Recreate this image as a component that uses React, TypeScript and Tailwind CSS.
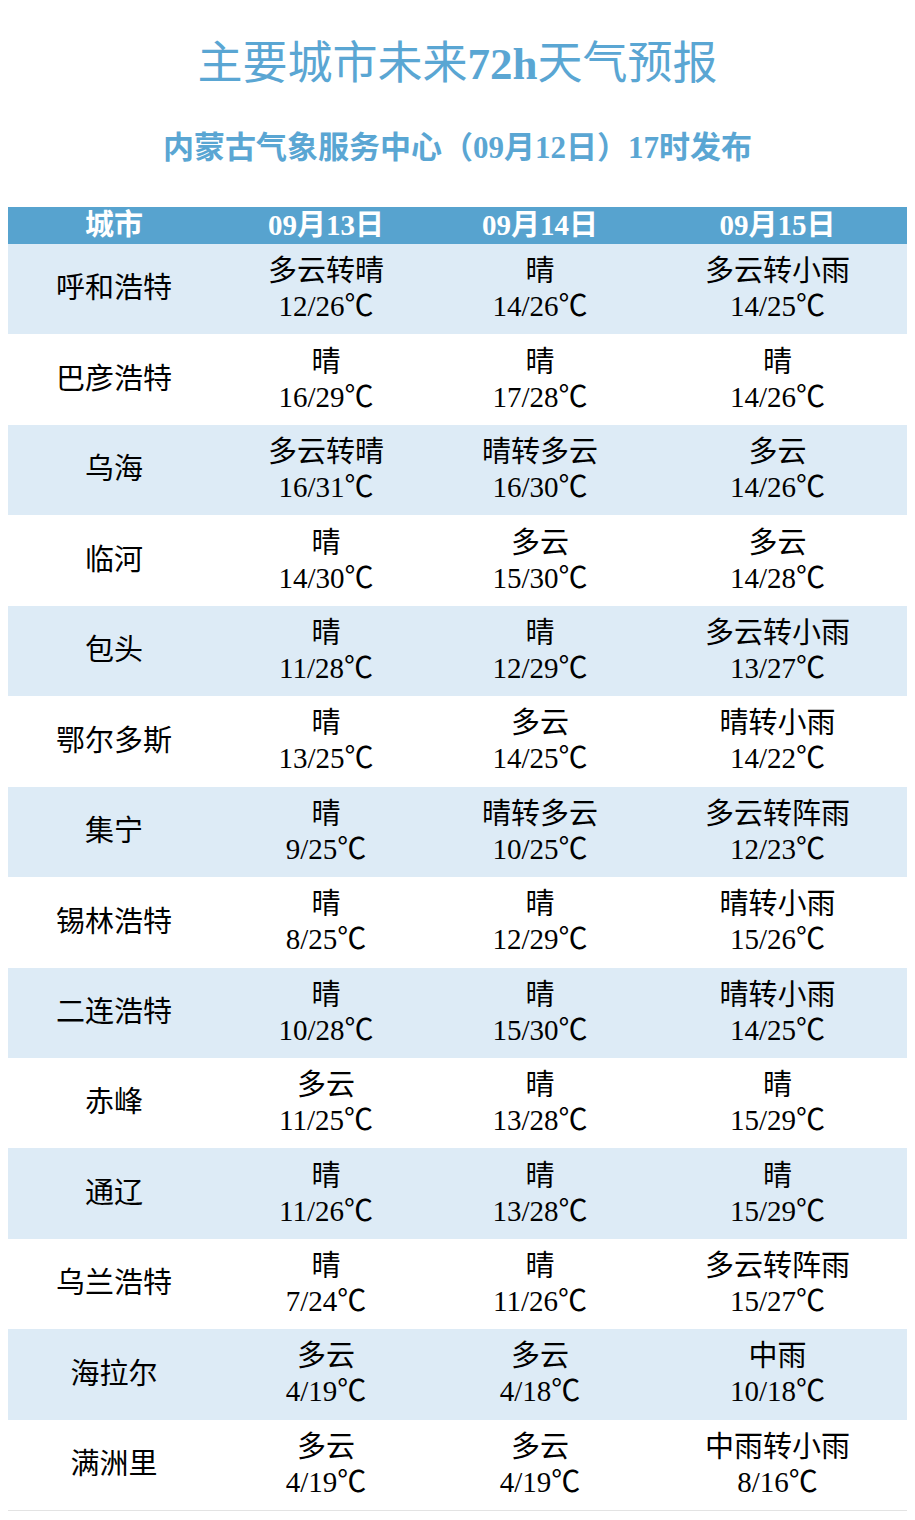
const rows: [string, string, string, string, string, string, string][] = [
  ['呼和浩特', '多云转晴', '12/26℃', '晴', '14/26℃', '多云转小雨', '14/25℃'],
  ['巴彦浩特', '晴', '16/29℃', '晴', '17/28℃', '晴', '14/26℃'],
  ['乌海', '多云转晴', '16/31℃', '晴转多云', '16/30℃', '多云', '14/26℃'],
  ['临河', '晴', '14/30℃', '多云', '15/30℃', '多云', '14/28℃'],
  ['包头', '晴', '11/28℃', '晴', '12/29℃', '多云转小雨', '13/27℃'],
  ['鄂尔多斯', '晴', '13/25℃', '多云', '14/25℃', '晴转小雨', '14/22℃'],
  ['集宁', '晴', '9/25℃', '晴转多云', '10/25℃', '多云转阵雨', '12/23℃'],
  ['锡林浩特', '晴', '8/25℃', '晴', '12/29℃', '晴转小雨', '15/26℃'],
  ['二连浩特', '晴', '10/28℃', '晴', '15/30℃', '晴转小雨', '14/25℃'],
  ['赤峰', '多云', '11/25℃', '晴', '13/28℃', '晴', '15/29℃'],
  ['通辽', '晴', '11/26℃', '晴', '13/28℃', '晴', '15/29℃'],
  ['乌兰浩特', '晴', '7/24℃', '晴', '11/26℃', '多云转阵雨', '15/27℃'],
  ['海拉尔', '多云', '4/19℃', '多云', '4/18℃', '中雨', '10/18℃'],
  ['满洲里', '多云', '4/19℃', '多云', '4/19℃', '中雨转小雨', '8/16℃'],
];

const cols = 'grid grid-cols-[212px_212px_216px_259px]';

function Cell({ top, bottom }: { top: string; bottom: string }) {
  return (
    <div className="flex flex-col items-center justify-center leading-[35px]">
      <span>{top}</span>
      <span>{bottom}</span>
    </div>
  );
}

export default function App() {
  return (
    <div
      className="w-[915px] min-h-[1520px] bg-white text-black"
      style={{ fontFamily: '"Liberation Serif", "Noto Sans CJK SC", serif' }}
    >
      <div className="flex flex-col items-center">
        <h1 className="mt-[42px] text-[45px] leading-[45px] font-normal text-[#5aa6d3]">
          主要城市未来<span className="font-bold">72h</span>天气预报
        </h1>
        <h2 className="mt-[45px] text-[31px] leading-[31px] font-bold text-[#5aa6d3]">
          内蒙古气象服务中心（09月12日）17时发布
        </h2>
      </div>

      <div className="mx-[8px] mt-[44px] w-[899px] border-b border-[#e3e3e3]">
        <div
          className={`${cols} h-[37px] items-center bg-[#57a3cf] text-[29px] leading-[37px] font-bold text-white`}
        >
          <div className="text-center">城市</div>
          <div className="text-center">09月13日</div>
          <div className="text-center">09月14日</div>
          <div className="text-center">09月15日</div>
        </div>
        {rows.map((r, i) => (
          <div
            key={r[0]}
            className={`${cols} h-[90.45px] text-[29px] ${
              i % 2 === 0 ? 'bg-[#ddebf6]' : 'bg-white'
            }`}
          >
            <div className="flex items-center justify-center">{r[0]}</div>
            <Cell top={r[1]} bottom={r[2]} />
            <Cell top={r[3]} bottom={r[4]} />
            <Cell top={r[5]} bottom={r[6]} />
          </div>
        ))}
      </div>
    </div>
  );
}
